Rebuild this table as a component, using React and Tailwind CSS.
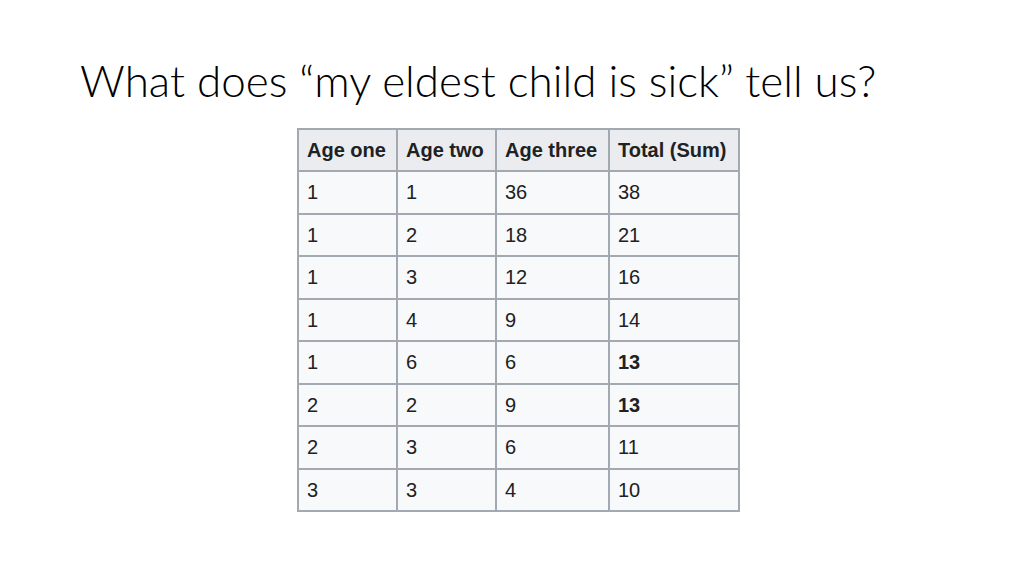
const rows = [
  ["1", "1", "36", "38"],
  ["1", "2", "18", "21"],
  ["1", "3", "12", "16"],
  ["1", "4", "9", "14"],
  ["1", "6", "6", "13", true],
  ["2", "2", "9", "13", true],
  ["2", "3", "6", "11"],
  ["3", "3", "4", "10"],
];

const headers = ["Age one", "Age two", "Age three", "Total (Sum)"];
const widths = ["w-[99px]", "w-[99px]", "w-[113px]", "w-[130px]"];

const App = () => {
  return (
    <div className="w-[1024px] h-[576px] bg-white overflow-hidden">
      <h1 className="pl-[80px] pt-[56px] text-[44px] leading-[48px] font-light text-black font-['Lato',sans-serif]">
        What does “my eldest child is sick” tell us?
      </h1>

      <div className="ml-[297px] mt-[24px]">
        <table className="table-fixed border-collapse font-['Liberation_Sans',Arial,sans-serif] text-[20px] text-[#202122]">
          <thead>
            <tr className="h-[42px] bg-[#eaecf0]">
              {headers.map((h, i) => (
                <th
                  key={h}
                  className={`${widths[i]} border-2 border-[#a2a9b1] pl-[8px] pr-0 text-left font-bold whitespace-nowrap`}
                >
                  {h}
                </th>
              ))}
            </tr>
          </thead>
          <tbody>
            {rows.map((r, idx) => (
              <tr key={idx} className="h-[42.5px] bg-[#f8f9fa]">
                {r.slice(0, 4).map((c, i) => (
                  <td
                    key={i}
                    className={`border-2 border-[#a2a9b1] pl-[8px] ${
                      i === 3 && r[4] ? "font-bold" : ""
                    }`}
                  >
                    {c}
                  </td>
                ))}
              </tr>
            ))}
          </tbody>
        </table>
      </div>
    </div>
  );
};

export default App;
